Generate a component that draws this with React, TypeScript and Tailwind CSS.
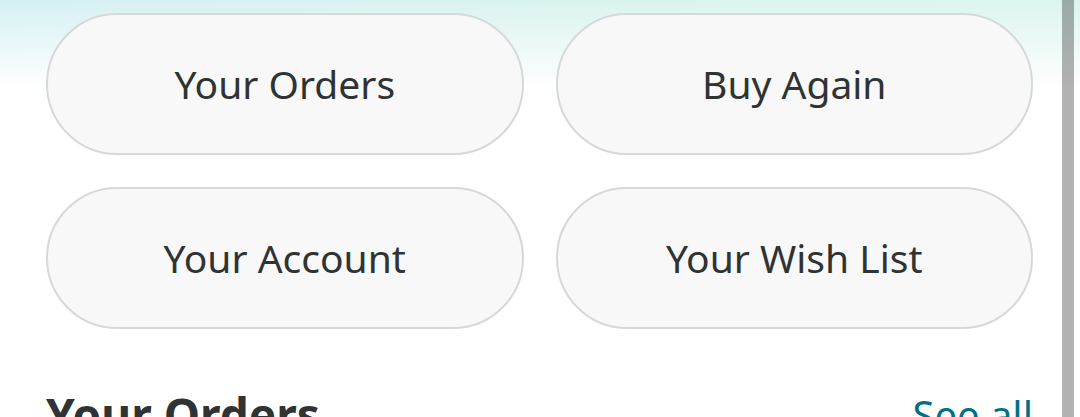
import React from "react";

const Pill = ({ label }: { label: string }) => (
  <button className="h-[142px] rounded-full border-2 border-[#d5d9d9] bg-[#f8f8f8] text-[#2f3333] text-[39px] flex items-center justify-center">
    {label}
  </button>
);

export default function App() {
  return (
    <div
      className="relative w-[1080px] h-[417px] overflow-hidden bg-white bg-[linear-gradient(to_bottom,rgba(255,255,255,0)_0px,rgba(255,255,255,0.45)_40px,#ffffff_88px),linear-gradient(to_right,#d5f0f3,#d9f3ef_50%,#dcf5ee)]"
      style={{ fontFamily: '"Noto Sans", "Open Sans", sans-serif' }}
    >
      <div className="pl-[46px] pr-[47px] pt-[13px]">
        <div className="grid grid-cols-2 gap-x-[32px] gap-y-[32px]">
          <Pill label="Your Orders" />
          <Pill label="Buy Again" />
          <Pill label="Your Account" />
          <Pill label="Your Wish List" />
        </div>
        <div className="mt-[62px] flex items-start justify-between">
          <h2 className="text-[46px] font-bold text-[#2f3333] leading-none">Your Orders</h2>
          <a className="text-[40px] text-[#007185] leading-none mt-[4px]">See all</a>
        </div>
      </div>
      <div className="absolute top-0 right-[6px] w-[12px] h-full bg-black/30" />
    </div>
  );
}
